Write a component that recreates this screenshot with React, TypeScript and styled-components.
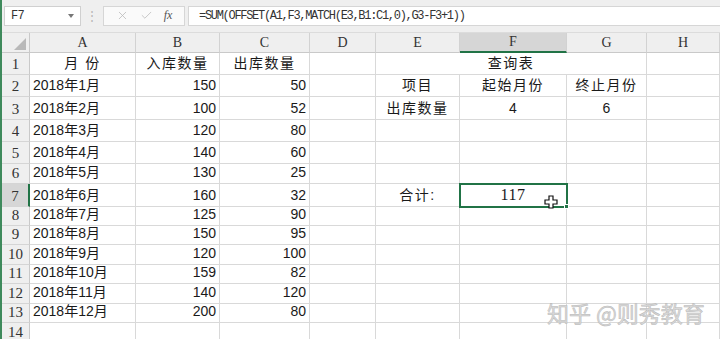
import React from "react";
import styled, { createGlobalStyle, css } from "styled-components";
import { X, Check } from "lucide-react";

const GlobalStyle = createGlobalStyle`
  html, body {
    margin: 0;
    padding: 0;
    background: #ffffff;
    overflow: hidden;
  }
  * {
    box-sizing: border-box;
  }
`;

const COLS = ["A", "B", "C", "D", "E", "F", "G", "H"];
const COL_WIDTHS = [28, 106, 84, 90, 66, 84, 107, 80, 73];
const ROW_HEIGHTS = [20, 22, 22, 23, 22, 22, 20, 23, 19, 19, 20, 19, 20, 19, 20];

const data = [
  ["2018年1月", 150, 50],
  ["2018年2月", 100, 52],
  ["2018年3月", 120, 80],
  ["2018年4月", 140, 60],
  ["2018年5月", 130, 25],
  ["2018年6月", 160, 32],
  ["2018年7月", 125, 90],
  ["2018年8月", 150, 95],
  ["2018年9月", 120, 100],
  ["2018年10月", 159, 82],
  ["2018年11月", 140, 120],
  ["2018年12月", 200, 80],
];

const Window = styled.div`
  position: relative;
  width: 720px;
  height: 339px;
  overflow: hidden;
  border-left: 2px solid #3f8a5c;
  background: #ffffff;
  font-family: "Liberation Sans", "Noto Sans CJK SC", sans-serif;
  color: #1a1a1a;
`;

const FormulaBar = styled.div`
  display: flex;
  align-items: center;
  height: 33px;
  padding: 6px 0 7px 2px;
  background: #efefef;
  border-bottom: 1px solid #dcdcdc;
`;

const NameBox = styled.div`
  display: flex;
  align-items: center;
  justify-content: space-between;
  width: 77px;
  height: 20px;
  padding: 0 6px 0 6px;
  background: #ffffff;
  border: 1px solid #d0d0d0;
  font-family: "Liberation Mono", monospace;
  font-size: 12px;
  letter-spacing: -0.8px;
  color: #333;
`;

const Caret = styled.span`
  width: 0;
  height: 0;
  border-left: 3px solid transparent;
  border-right: 3px solid transparent;
  border-top: 4px solid #777;
`;

const Grip = styled.span`
  width: 22px;
  text-align: center;
  color: #b5b5b5;
  font-size: 12px;
`;

const ActionBox = styled.div`
  display: flex;
  align-items: center;
  justify-content: space-around;
  width: 82px;
  height: 20px;
  margin-right: 3px;
  padding: 0 6px;
  background: #fafafa;
  border: 1px solid #d6d6d6;
  color: #b8b8b8;
`;

const Fx = styled.span`
  font-family: "Liberation Serif", serif;
  font-style: italic;
  font-size: 12px;
  color: #555;
`;

const FormulaInput = styled.div`
  flex: 1;
  height: 20px;
  padding: 0 10px;
  background: #ffffff;
  border: 1px solid #d6d6d6;
  border-right: none;
  font-family: "Liberation Mono", monospace;
  font-size: 12px;
  letter-spacing: -1.3px;
  line-height: 18px;
  color: #333;
  white-space: nowrap;
`;

const Sheet = styled.div`
  display: grid;
  grid-template-columns: ${COL_WIDTHS.map((w) => `${w}px`).join(" ")};
  grid-template-rows: ${ROW_HEIGHTS.map((h) => `${h}px`).join(" ")};
`;

const Corner = styled.div`
  position: relative;
  background: #efefef;
  border-right: 1px solid #c9c9c9;
  border-bottom: 1px solid #c9c9c9;
  display: flex;
  align-items: flex-end;
  justify-content: flex-end;
  padding: 0 3px 2px 0;
`;

const ColHead = styled.div<{ $active?: boolean }>`
  display: flex;
  align-items: center;
  justify-content: center;
  background: ${(p) => (p.$active ? "#d6d6d6" : "#efefef")};
  border-right: 1px solid #d2d2d2;
  border-bottom: ${(p) => (p.$active ? "2px solid #217346" : "1px solid #c9c9c9")};
  font-family: "Liberation Serif", serif;
  font-size: 14px;
  color: #333;
`;

const RowHead = styled.div<{ $active?: boolean }>`
  display: flex;
  align-items: flex-end;
  justify-content: center;
  padding-bottom: 1px;
  background: ${(p) => (p.$active ? "#d6d6d6" : "#efefef")};
  border-right: ${(p) => (p.$active ? "2px solid #217346" : "1px solid #c9c9c9")};
  border-bottom: 1px solid #d5d5d5;
  font-family: "Liberation Serif", serif;
  font-size: 15px;
  color: #333;
`;

const Cell = styled.div<{
  $align?: "left" | "center" | "right";
  $span?: number;
  $spaced?: boolean;
  $serif?: boolean;
  $selected?: boolean;
}>`
  position: relative;
  display: flex;
  align-items: flex-end;
  justify-content: ${(p) =>
    p.$align === "right" ? "flex-end" : p.$align === "center" ? "center" : "flex-start"};
  padding: 0 3px 2px 3px;
  border-right: 1px solid #d9d9d9;
  border-bottom: 1px solid #d9d9d9;
  font-size: 14px;
  line-height: 18px;
  white-space: nowrap;
  ${(p) => p.$span && css`grid-column: span ${p.$span};`}
  ${(p) => p.$spaced && css`letter-spacing: 1.5px;`}
  ${(p) =>
    p.$serif &&
    css`
      font-family: "Liberation Serif", "Noto Sans CJK SC", serif;
      font-size: 16px;
      letter-spacing: 0.5px;
    `}
  ${(p) =>
    p.$selected &&
    css`
      outline: 2px solid #217346;
      outline-offset: -1px;
      z-index: 1;
    `}
`;

const Handle = styled.span`
  position: absolute;
  right: -3px;
  bottom: -3px;
  width: 5px;
  height: 5px;
  background: #217346;
  border: 1px solid #ffffff;
`;

const Cursor = styled.svg`
  position: absolute;
  left: 84px;
  top: 11px;
`;

const Watermark = styled.div`
  position: absolute;
  left: 545px;
  top: 296px;
  font-family: "Noto Sans CJK SC", sans-serif;
  font-size: 22px;
  color: #dadada;
  -webkit-text-stroke: 0.5px #b8b8b8;
  white-space: nowrap;
  pointer-events: none;
`;

function emptyCells(n: number, key: string) {
  return Array.from({ length: n }, (_, i) => <Cell key={`${key}-${i}`} />);
}

function sideCells(row: number) {
  if (row === 1) {
    return [
      <Cell key="e1" $span={3} $align="center" $spaced>
        查询表
      </Cell>,
      <Cell key="h1" />,
    ];
  }
  if (row === 2) {
    return [
      <Cell key="e2" $align="center" $spaced>项目</Cell>,
      <Cell key="f2" $align="center" $spaced>起始月份</Cell>,
      <Cell key="g2" $align="center" $spaced>终止月份</Cell>,
      <Cell key="h2" />,
    ];
  }
  if (row === 3) {
    return [
      <Cell key="e3" $align="center" $spaced>出库数量</Cell>,
      <Cell key="f3" $align="center">4</Cell>,
      <Cell key="g3" $align="center">6</Cell>,
      <Cell key="h3" />,
    ];
  }
  if (row === 7) {
    return [
      <Cell key="e7" $align="center" $spaced>合计:</Cell>,
      <Cell key="f7" $align="center" $serif $selected>
        117
        <Handle />
        <Cursor width="14" height="14" viewBox="0 0 14 14">
          <path
            d="M5 1h4v4h4v4h-4v4h-4v-4h-4v-4h4z"
            fill="#ffffff"
            stroke="#111"
            strokeWidth="1.2"
          />
        </Cursor>
      </Cell>,
      <Cell key="g7" />,
      <Cell key="h7" />,
    ];
  }
  return emptyCells(4, `s${row}`);
}

export default function App() {
  const rows: React.ReactNode[] = [];

  rows.push(
    <Corner key="corner">
      <svg width="12" height="12" viewBox="0 0 12 12">
        <path d="M12 0V12H0z" fill="#b9b9b9" />
      </svg>
    </Corner>
  );
  COLS.forEach((c) =>
    rows.push(
      <ColHead key={`h-${c}`} $active={c === "F"}>
        {c}
      </ColHead>
    )
  );

  for (let r = 1; r <= 14; r++) {
    rows.push(
      <RowHead key={`r-${r}`} $active={r === 7}>
        {r}
      </RowHead>
    );
    if (r === 1) {
      rows.push(
        <Cell key="a1" $align="center" $spaced>月 份</Cell>,
        <Cell key="b1" $align="center" $spaced>入库数量</Cell>,
        <Cell key="c1" $align="center" $spaced>出库数量</Cell>
      );
    } else if (r <= 13) {
      const [month, inQty, outQty] = data[r - 2];
      rows.push(
        <Cell key={`a${r}`}>{month}</Cell>,
        <Cell key={`b${r}`} $align="right">{inQty}</Cell>,
        <Cell key={`c${r}`} $align="right">{outQty}</Cell>
      );
    } else {
      rows.push(...emptyCells(3, `l${r}`));
    }
    rows.push(<Cell key={`d${r}`} />);
    rows.push(...sideCells(r));
  }

  return (
    <>
      <GlobalStyle />
      <Window>
        <FormulaBar>
          <NameBox>
            F7
            <Caret />
          </NameBox>
          <Grip>⋮</Grip>
          <ActionBox>
            <X size={13} strokeWidth={1.4} />
            <Check size={13} strokeWidth={1.4} />
            <Fx>fx</Fx>
          </ActionBox>
          <FormulaInput>=SUM(OFFSET(A1,F3,MATCH(E3,B1:C1,0),G3-F3+1))</FormulaInput>
        </FormulaBar>
        <Sheet>{rows}</Sheet>
        <Watermark>知乎 @则秀教育</Watermark>
      </Window>
    </>
  );
}
